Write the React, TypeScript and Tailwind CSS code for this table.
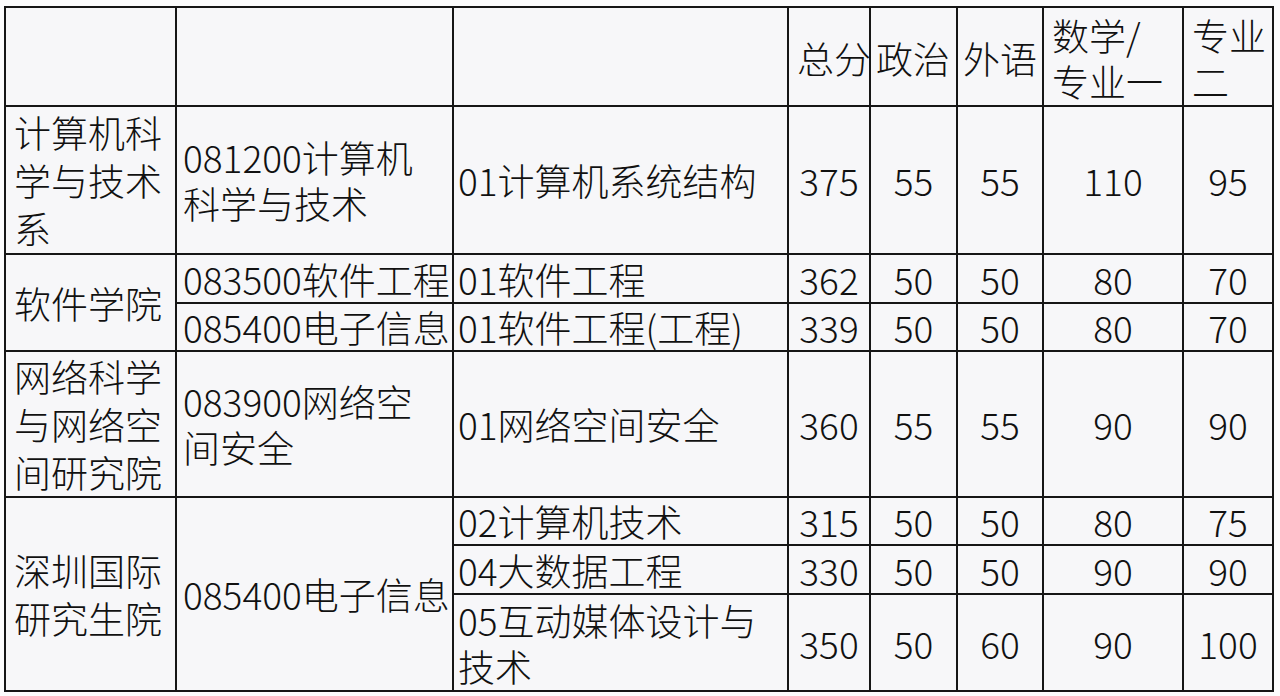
const cell = "border-2 border-[#161616] bg-[#f7f7f9] align-middle p-0 whitespace-nowrap";
const num = `${cell} text-center`;
const dept = `${cell} pl-[8px] leading-[48px]`;

type Row = {
  major: string;
  score: string[];
};

const shenzhen: Row[] = [
  { major: "02计算机技术", score: ["315", "50", "50", "80", "75"] },
  { major: "04大数据工程", score: ["330", "50", "50", "90", "90"] },
];

function Scores({ values }: { values: string[] }) {
  return (
    <>
      {values.map((v, i) => (
        <td key={i} className={num}>
          {v}
        </td>
      ))}
    </>
  );
}

export default function App() {
  return (
    <div
      className="min-h-screen bg-[#fcfcfd] pl-[4px] pt-[6px] text-[37px] font-light leading-[46px] text-[#111111]"
      style={{ fontFamily: '"Noto Sans CJK SC", "Noto Sans", sans-serif' }}
    >
      <table className="w-[1268px] table-fixed border-collapse">
        <colgroup>
          <col className="w-[171px]" />
          <col className="w-[277px]" />
          <col className="w-[335px]" />
          <col className="w-[82px]" />
          <col className="w-[87px]" />
          <col className="w-[86px]" />
          <col className="w-[140px]" />
          <col className="w-[90px]" />
        </colgroup>
        <tbody>
          <tr className="h-[99px]">
            <td className={cell} />
            <td className={cell} />
            <td className={cell} />
            <td className={`${cell} pl-[8px] pt-[3px]`}>总分</td>
            <td className={`${cell} pl-[5px] pt-[3px]`}>政治</td>
            <td className={`${cell} pl-[5px] pt-[3px]`}>外语</td>
            <td className={`${cell} pl-[8px] pt-[3px]`}>
              数学/
              <br />
              专业一
            </td>
            <td className={`${cell} pl-[8px] pt-[3px]`}>
              专业
              <br />
              二
            </td>
          </tr>

          <tr className="h-[148px]">
            <td className={dept}>
              计算机科
              <br />
              学与技术
              <br />系
            </td>
            <td className={`${cell} pl-[6px]`}>
              081200计算机
              <br />
              科学与技术
            </td>
            <td className={`${cell} pl-[4px]`}>01计算机系统结构</td>
            <Scores values={["375", "55", "55", "110", "95"]} />
          </tr>

          <tr className="h-[49px]">
            <td rowSpan={2} className={dept}>
              软件学院
            </td>
            <td className={`${cell} pl-[6px]`}>083500软件工程</td>
            <td className={`${cell} pl-[4px]`}>01软件工程</td>
            <Scores values={["362", "50", "50", "80", "70"]} />
          </tr>
          <tr className="h-[48px]">
            <td className={`${cell} pl-[6px]`}>085400电子信息</td>
            <td className={`${cell} pl-[4px]`}>01软件工程(工程)</td>
            <Scores values={["339", "50", "50", "80", "70"]} />
          </tr>

          <tr className="h-[146px]">
            <td className={dept}>
              网络科学
              <br />
              与网络空
              <br />
              间研究院
            </td>
            <td className={`${cell} pl-[6px]`}>
              083900网络空
              <br />
              间安全
            </td>
            <td className={`${cell} pl-[4px]`}>01网络空间安全</td>
            <Scores values={["360", "55", "55", "90", "90"]} />
          </tr>

          {shenzhen.map((row, i) => (
            <tr key={row.major} className={i === 0 ? "h-[48px]" : "h-[49px]"}>
              {i === 0 ? (
                <>
                  <td rowSpan={3} className={dept}>
                    深圳国际
                    <br />
                    研究生院
                  </td>
                  <td rowSpan={3} className={`${cell} pl-[6px]`}>
                    085400电子信息
                  </td>
                </>
              ) : null}
              <td className={`${cell} pl-[4px]`}>{row.major}</td>
              <Scores values={row.score} />
            </tr>
          ))}
          <tr className="h-[97px]">
            <td className={`${cell} pl-[4px]`}>
              05互动媒体设计与
              <br />
              技术
            </td>
            <Scores values={["350", "50", "60", "90", "100"]} />
          </tr>
        </tbody>
      </table>
    </div>
  );
}
